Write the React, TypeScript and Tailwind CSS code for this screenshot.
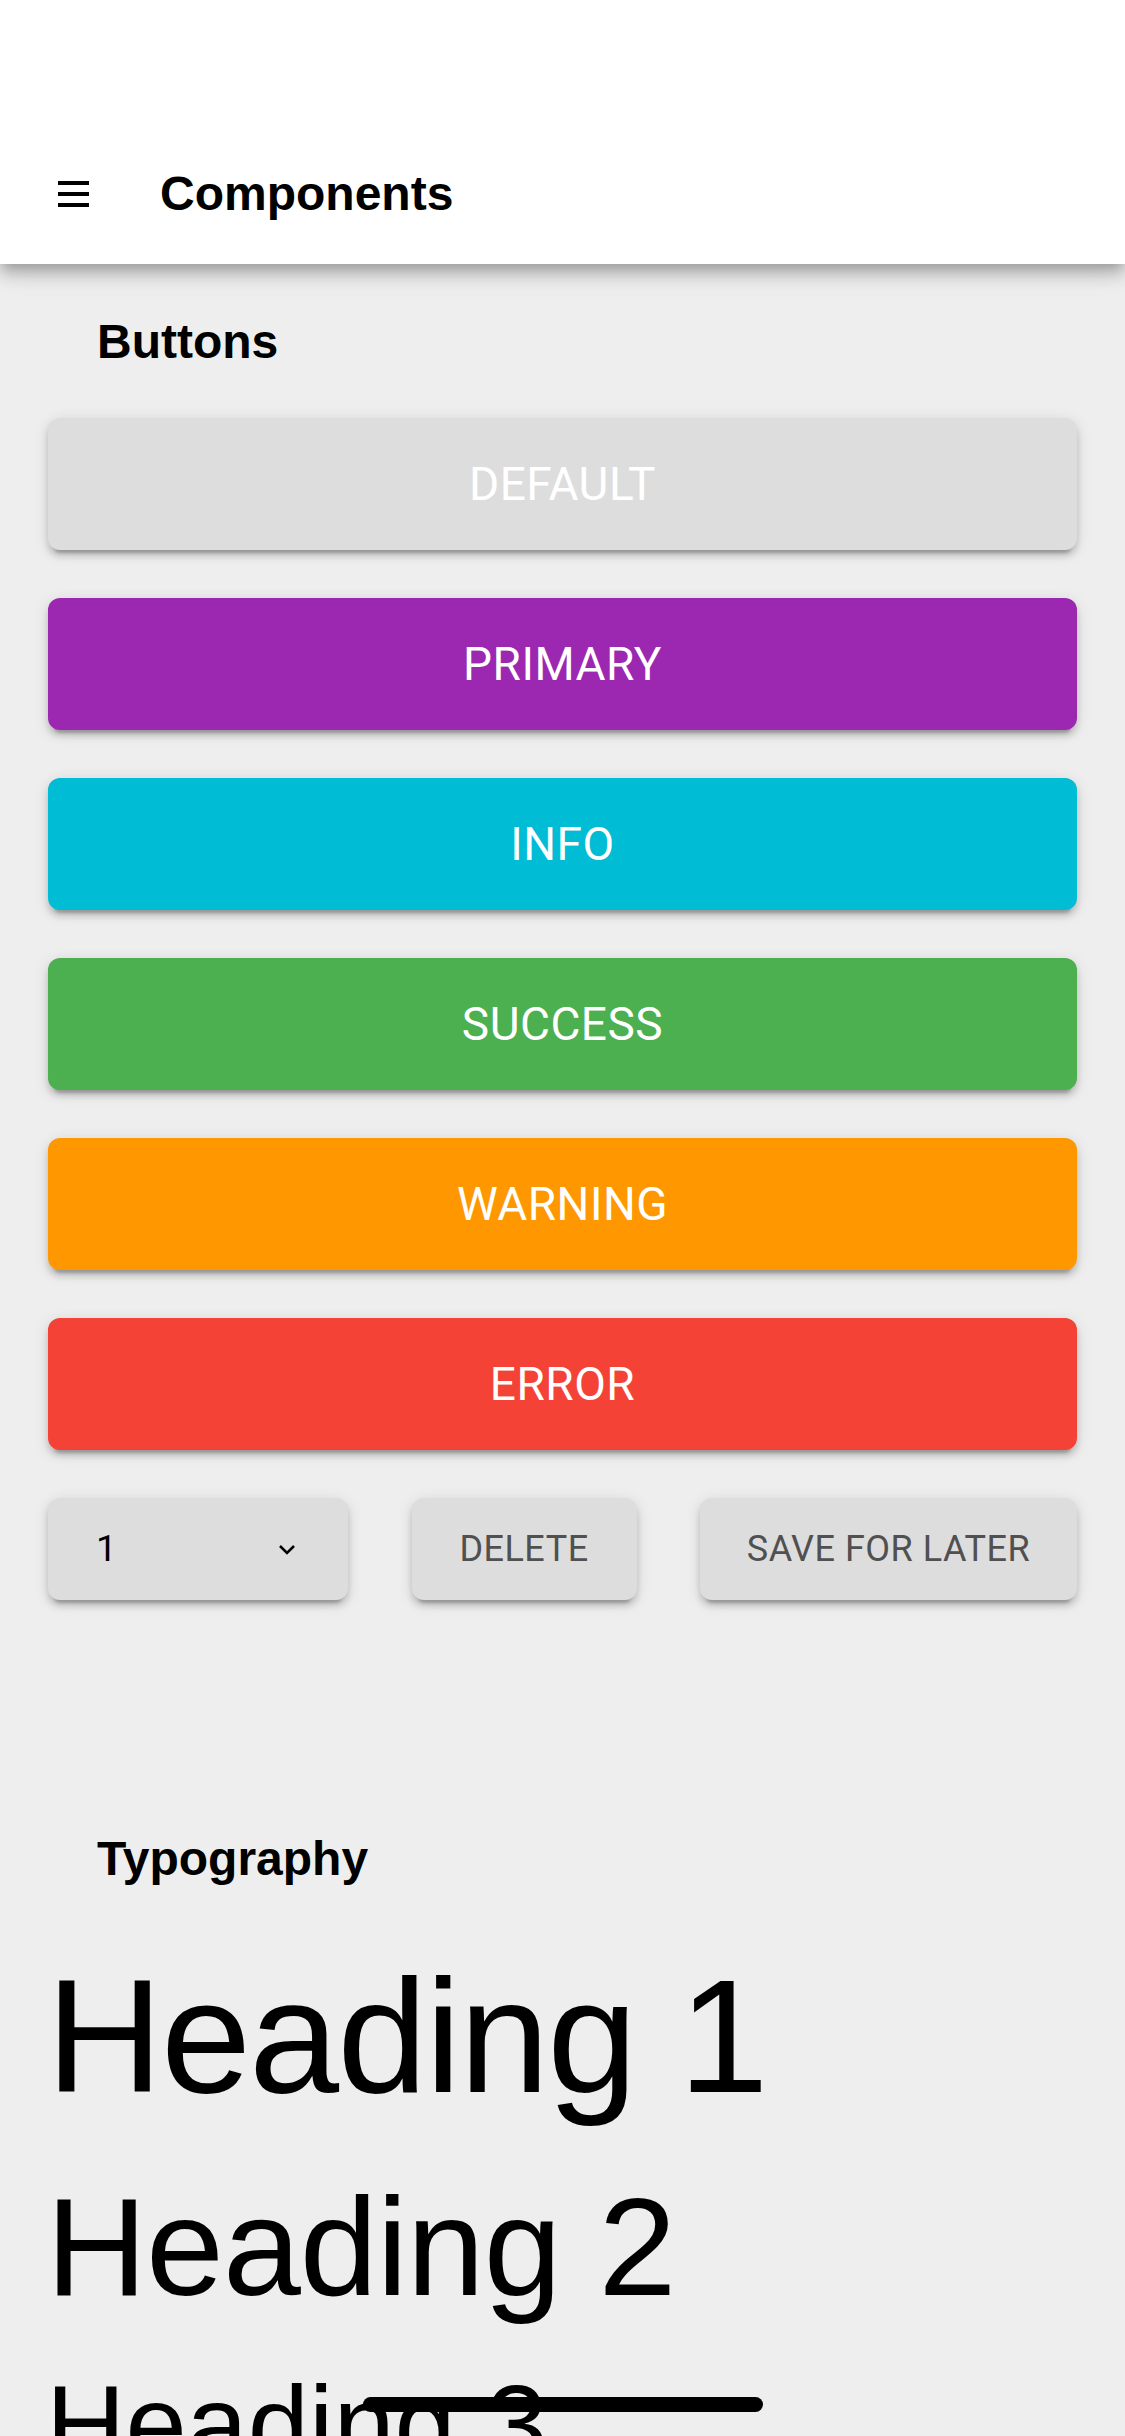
import React from 'react';

const raised =
  'shadow-[0_9px_3px_-6px_rgba(0,0,0,0.2),0_6px_6px_0_rgba(0,0,0,0.14),0_3px_15px_0_rgba(0,0,0,0.12)]';

const buttons = [
  { label: 'DEFAULT', bg: 'bg-[#dddddd]' },
  { label: 'PRIMARY', bg: 'bg-[#9c27b0]' },
  { label: 'INFO', bg: 'bg-[#00bcd4]' },
  { label: 'SUCCESS', bg: 'bg-[#4caf50]' },
  { label: 'WARNING', bg: 'bg-[#ff9800]' },
  { label: 'ERROR', bg: 'bg-[#f44336]' },
];

const Header: React.FC = () => (
  <header className="relative z-10 h-[264px] bg-white flex items-end shadow-[0_6px_12px_-3px_rgba(0,0,0,0.2),0_12px_15px_0_rgba(0,0,0,0.14),0_3px_30px_0_rgba(0,0,0,0.12)]">
    <div className="h-[140px] w-full flex items-center">
      <button className="ml-[58px] w-[31px] h-[26px]">
        <svg width="31" height="26" viewBox="0 0 31 26">
          <rect x="0" y="0" width="31" height="4" fill="#000" />
          <rect x="0" y="11" width="31" height="4" fill="#000" />
          <rect x="0" y="22" width="31" height="4" fill="#000" />
        </svg>
      </button>
      <h1 className="ml-[71px] text-[48px] leading-[48px] font-bold text-black">Components</h1>
    </div>
  </header>
);

const SectionTitle: React.FC<{ children: React.ReactNode; className?: string }> = ({ children, className }) => (
  <h2 className={`pl-[97px] text-[48px] leading-[48px] font-bold text-black ${className ?? ''}`}>{children}</h2>
);

export default function App() {
  return (
    <div className="min-h-screen bg-[#eeeeee] font-['Liberation_Sans',Arial,sans-serif]">
      <Header />

      <main className="pb-[200px]">
        <SectionTitle className="pt-[54px]">Buttons</SectionTitle>

        <div className="px-[48px] mt-[52px] flex flex-col gap-[48px]">
          {buttons.map((b) => (
            <button
              key={b.label}
              className={`h-[132px] w-full rounded-[12px] ${b.bg} ${raised} text-white font-['Roboto',sans-serif] text-[46px] tracking-[0.5px]`}
            >
              {b.label}
            </button>
          ))}

          <div className="flex justify-between items-center font-['Roboto',sans-serif]">
            <div className={`h-[102px] w-[300px] rounded-[12px] bg-[#dddddd] ${raised} flex items-center pl-[48px] pr-[52px] justify-between`}>
              <span className="text-[37px] text-black">1</span>
              <svg width="18" height="11" viewBox="0 0 18 11">
                <path d="M2 2 L9 9 L16 2" stroke="#000" strokeWidth="2.5" fill="none" />
              </svg>
            </div>
            <button className={`h-[102px] w-[225px] rounded-[12px] bg-[#dddddd] ${raised} text-[36px] text-[#505050] tracking-[0.5px]`}>
              DELETE
            </button>
            <button className={`h-[102px] w-[377px] rounded-[12px] bg-[#dddddd] ${raised} text-[36px] text-[#505050] tracking-[0.5px]`}>
              SAVE FOR LATER
            </button>
          </div>
        </div>

        <SectionTitle className="mt-[235px]">Typography</SectionTitle>

        <div className="px-[46px] text-black">
          <div className="mt-[72px] text-[162px] leading-[162px] tracking-[-2px]">Heading 1</div>
          <div className="mt-[60px] text-[140px] leading-[140px] tracking-[-1px]">Heading 2</div>
          <div className="mt-[52px] text-[110px] leading-[110px]">Heading 3</div>
        </div>
      </main>

      <div className="fixed bottom-[24px] left-1/2 -translate-x-1/2 w-[400px] h-[15px] rounded-full bg-black" />
    </div>
  );
}
